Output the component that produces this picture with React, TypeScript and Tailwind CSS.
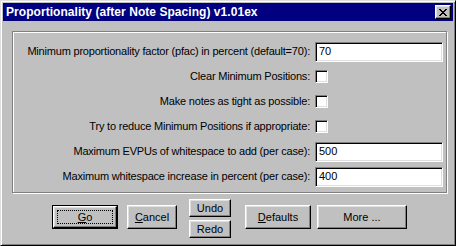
import React from "react";

const raised =
    "border border-t-white border-l-white border-r-black border-b-black shadow-[inset_-1px_-1px_0_#808080,inset_1px_1px_0_#dfdfdf]";
const sunken =
    "border border-t-[#808080] border-l-[#808080] border-r-white border-b-white shadow-[inset_1px_1px_0_#000,inset_-1px_-1px_0_#dfdfdf]";

function TextField({ value }: { value: string }) {
    return (
        <div className={`${sunken} w-[128px] h-[20px] bg-white flex items-center pl-[3px]`}>
            {value}
        </div>
    );
}

function Check() {
    return <div className={`${sunken} w-[13px] h-[13px] bg-white`} />;
}

function Row({ label, children }: { label: string; children: React.ReactNode }) {
    return (
        <div className="flex items-center justify-end h-[25px]">
            <span className="mr-[5px] whitespace-nowrap tracking-[-0.2px]">{label}</span>
            <div className="w-[128px] flex items-center">{children}</div>
        </div>
    );
}

function Btn({
    className = "",
    children,
}: {
    className?: string;
    children: React.ReactNode;
}) {
    return (
        <button className={`${raised} bg-[#c0c0c0] flex items-center justify-center ${className}`}>
            {children}
        </button>
    );
}

export default function App() {
    return (
        <div
            className="w-[456px] h-[246px] bg-[#c0c0c0] border border-t-[#dfdfdf] border-l-[#dfdfdf] border-r-black border-b-black shadow-[inset_1px_1px_0_#fff,inset_-1px_-1px_0_#808080] p-[2px] text-[11px] text-black"
            style={{ fontFamily: '"Liberation Sans", Arial, sans-serif' }}
        >
            {/* title bar */}
            <div className="h-[18px] bg-[#000080] flex items-center justify-between pl-[3px] pr-[2px]">
                <span className="text-white font-bold text-[12px] tracking-[0.05px] whitespace-nowrap">
                    Proportionality (after Note Spacing) v1.01ex
                </span>
                <div className={`${raised} bg-[#c0c0c0] w-[16px] h-[14px] flex items-center justify-center`}>
                    <svg width="8" height="7" viewBox="0 0 8 7">
                        <path
                            d="M0 0h2v1h1v1h2V1h1V0h2v1H7v1H6v1H5v1h1v1h1v1h1v1H6V6H5V5H3v1H2v1H0V6h1V5h1V4h1V3H2V2H1V1H0z"
                            fill="#000"
                        />
                    </svg>
                </div>
            </div>

            {/* group frame */}
            <div className="mt-[10px] ml-[9px] w-[435px] border border-[#808080] shadow-[inset_1px_1px_0_#fff,1px_1px_0_#fff] pt-[7px] pb-[3px] pr-[3px]">
                <Row label="Minimum proportionality factor (pfac) in percent (default=70):">
                    <TextField value="70" />
                </Row>
                <Row label="Clear Minimum Positions:">
                    <Check />
                </Row>
                <Row label="Make notes as tight as possible:">
                    <Check />
                </Row>
                <Row label="Try to reduce Minimum Positions if appropriate:">
                    <Check />
                </Row>
                <Row label="Maximum EVPUs of whitespace to add (per case):">
                    <TextField value="500" />
                </Row>
                <Row label="Maximum whitespace increase in percent (per case):">
                    <TextField value="400" />
                </Row>
            </div>

            {/* buttons */}
            <div className="flex items-start mt-[6px] ml-[49px]">
                <div className="mt-[6px] w-[66px] h-[24px] border border-black">
                    <Btn className="w-full h-full">
                        <span className="border border-dotted border-black w-[56px] h-[14px] flex items-center justify-center">
                            <span><u>G</u>o</span>
                        </span>
                    </Btn>
                </div>
                <Btn className="mt-[6px] ml-[9px] w-[50px] h-[24px]">
                    <span><u>C</u>ancel</span>
                </Btn>
                <div className="ml-[12px] flex flex-col gap-[3px]">
                    <Btn className="w-[42px] h-[18px]">Undo</Btn>
                    <Btn className="w-[42px] h-[18px]">Redo</Btn>
                </div>
                <Btn className="mt-[6px] ml-[14px] w-[66px] h-[24px]">
                    <span><u>D</u>efaults</span>
                </Btn>
                <Btn className="mt-[6px] ml-[6px] w-[90px] h-[24px]">More ...</Btn>
            </div>
        </div>
    );
}
